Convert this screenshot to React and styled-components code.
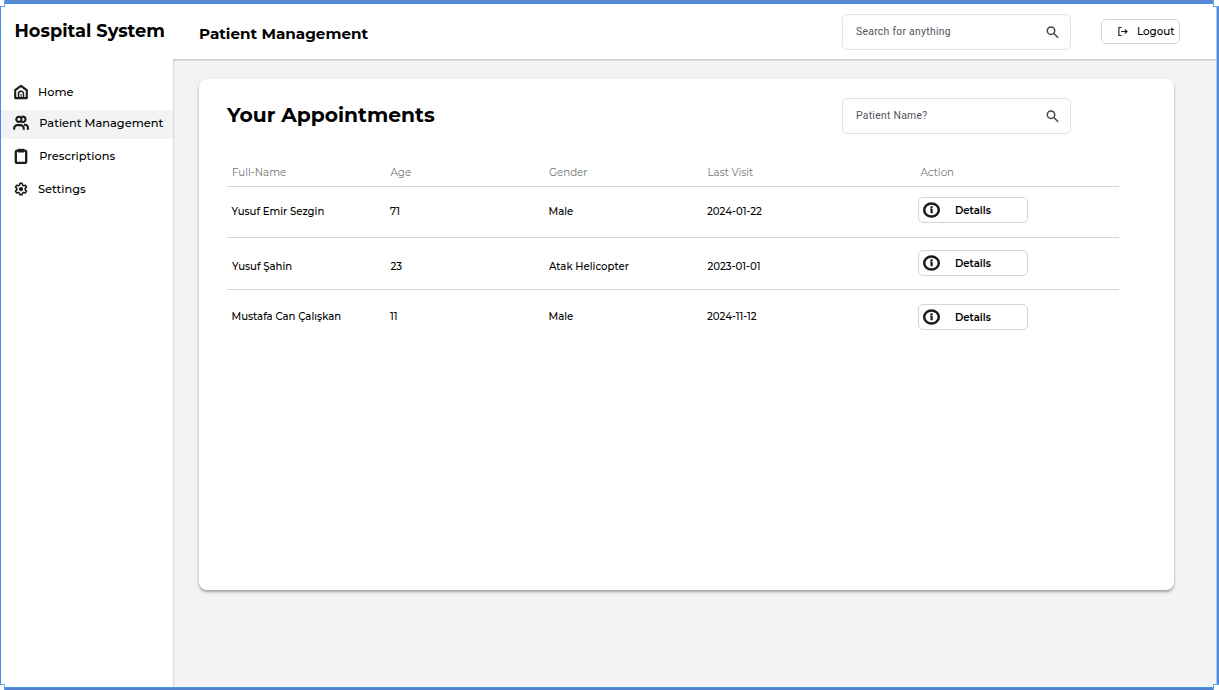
import React from "react";
import styled, { createGlobalStyle } from "styled-components";

const GlobalStyle = createGlobalStyle`
  * { box-sizing: border-box; }
  body { margin: 0; background: #fff; font-family: Montserrat, Inter, "Liberation Sans", sans-serif; color: #000; }
`;

const Window = styled.div`
  position: relative;
  display: flex;
  width: 1219px;
  height: 690px;
  overflow: hidden;
  background: #f2f3f5;
`;

const Frame = styled.div`
  position: absolute;
  inset: 0;
  z-index: 5;
  pointer-events: none;
  border-style: solid;
  border-width: 3px 2px 2px 1px;
  border-color: #5b88d0 #5585d3 #4f83d1 #448de3;
  box-shadow: inset 0 1px 0 #4290e8, inset 0 -1px 0 #4a97ea, inset -1px 0 0 #a9cdf5;
`;

const Handle = styled.i`
  position: absolute;
  z-index: 6;
  width: 8px;
  height: 8px;
  background: #fff;
  border: 1px solid #62a8f0;
  ${(p) => (p.$bottom ? "bottom: -2px;" : "top: -1px;")}
  ${(p) => (p.$right ? "right: -2px;" : "left: -3px;")}
`;

const Sidebar = styled.aside`
  flex: 0 0 173px;
  background: #fff;
  box-shadow: 0 0 2px rgba(0, 0, 0, 0.3);
  z-index: 1;
`;

const Text = styled.span`
  display: block;
  font-size: ${(p) => p.$size}px;
  font-weight: ${(p) => p.$weight || 500};
  letter-spacing: ${(p) => p.$track || 0}px;
  line-height: ${(p) => p.$line || 16}px;
  white-space: nowrap;
`;

const Brand = styled.div`
  height: 80px;
  padding: 18px 0 0 14.5px;
`;

const NavItem = styled.a`
  display: flex;
  align-items: center;
  height: ${(p) => p.$height}px;
  padding: 0 0 ${(p) => p.$lift}px 13px;
  gap: ${(p) => p.$gap}px;
  color: #000;
  background: ${(p) => (p.$active ? "#f2f3f5" : "transparent")};
`;

const Icon = styled.svg`
  flex: none;
  display: block;
  fill: none;
  stroke: ${(p) => p.$color || "#1b1b1d"};
  overflow: visible;
`;

const Main = styled.main`
  flex: 1;
  display: flex;
  flex-direction: column;
`;

const Header = styled.header`
  position: relative;
  z-index: 2;
  display: flex;
  height: 59px;
  padding: 14px 39px 0 26px;
  background: #fff;
  box-shadow: 0 1px 2px rgba(0, 0, 0, 0.25);
  clip-path: inset(0 0 -5px 0);
`;

const Title = styled.h1`
  flex: 1;
  margin: 0;
  padding-top: 10px;
`;

const SearchBox = styled.label`
  display: flex;
  align-items: center;
  justify-content: space-between;
  width: 229px;
  height: 36px;
  padding: 0 11px 0 13px;
  border: 1px solid #e2e2e4;
  border-radius: 5px;
  background: #fff;
  font-family: Roboto, sans-serif;
  color: #52525a;
`;

const LogoutButton = styled.div`
  display: flex;
  align-items: center;
  gap: 8px;
  width: 79px;
  height: 25px;
  margin: 5px 0 0 30px;
  padding: 1px 0 0 15px;
  border: 1px solid #d6d6d8;
  border-radius: 5px;
`;

const Card = styled.section`
  width: 975px;
  height: 511px;
  margin: 20px 0 0 26px;
  padding: 19px 55px 0 28px;
  border-radius: 8px;
  background: #fff;
  box-shadow: 0 2px 3px rgba(0, 0, 0, 0.34);
`;

const CardHead = styled.div`
  display: flex;
  justify-content: space-between;
  height: 62px;
  padding-right: 48px;
`;

const CardTitle = styled.h2`
  margin: 0;
  padding-top: 2px;
`;

const Row = styled.div`
  display: grid;
  grid-template-columns: 158.5px 158.5px 158.5px ${(p) => (p.$head ? 213 : 211)}px 1fr;
  align-items: start;
  height: ${(p) => p.$height}px;
  padding: ${(p) => p.$top}px 0 0 ${(p) => p.$left}px;
  border-bottom: ${(p) => (p.$last ? "0" : "1px solid #d8d6d8")};
  color: ${(p) => (p.$head ? "#757575" : "#000")};
`;

const DetailsButton = styled.div`
  display: flex;
  align-items: center;
  gap: 14px;
  width: 110px;
  height: 26px;
  margin: ${(p) => p.$offset}px 0 0 ${(p) => p.$shift}px;
  padding-left: 3px;
  border: 1px solid #d4d4d6;
  border-radius: 5px;
`;

const DetailsLabel = styled(Text)`
  padding-top: 1px;
`;

const HomeIcon = () => (
  <Icon width="16" height="16" viewBox="0 0 16 16" strokeWidth="2.1" strokeLinejoin="round">
    <path d="M2.2 6.2 8 1.8l5.8 4.4v7.9H2.2Z" />
    <path d="M5.5 14V9.8a2.5 2.5 0 0 1 5 0V14" strokeWidth="1.5" />
    <path d="M8 10v4" strokeWidth="1" />
  </Icon>
);

const UsersIcon = () => (
  <Icon width="16" height="16" viewBox="0 0 16 16" strokeWidth="2.1">
    <circle cx="5.9" cy="4.3" r="2.6" />
    <path d="M8.6 1.9a2.7 2.7 0 1 1 0 4.8" />
    <path d="M1.2 14.8v-1.5a3.2 3.2 0 0 1 3.2-3.2h3.1a3.2 3.2 0 0 1 3.2 3.2v1.5M11 9.7h1a2.9 2.9 0 0 1 2.9 2.9v2.2" />
  </Icon>
);

const ClipboardIcon = () => (
  <Icon width="16" height="16" viewBox="0 0 16 16" strokeWidth="2.3" strokeLinejoin="round">
    <rect x="2.8" y="2.6" width="10.4" height="12.2" rx="1.4" />
    <path d="M4.8 0.8h6.4v3.7H4.8Z" fill="#1b1b1d" stroke="none" />
  </Icon>
);

const SettingsIcon = () => (
  <Icon width="16" height="16" viewBox="0 0 16 16" strokeWidth="1.6" strokeLinejoin="round">
    <path d="m6.9 2.3-.4 1.8-1.2.7-1.7-.5-1.1 1.9 1.3 1.2v1.4L2.5 10l1.1 1.9 1.7-.5 1.2.7.4 1.7h2.2l.4-1.7 1.2-.7 1.7.5 1.1-1.9-1.3-1.2V7.4l1.3-1.2-1.1-1.9-1.7.5-1.2-.7-.4-1.8Z" />
    <circle cx="8" cy="8.1" r="1.3" fill="#1b1b1d" />
  </Icon>
);

const SearchIcon = () => (
  <Icon width="13" height="13" viewBox="0 0 13 13" strokeWidth="1.5" $color="#45454b">
    <circle cx="5" cy="4.7" r="3.7" />
    <path d="m7.8 7.5 4.3 4.3" />
  </Icon>
);

const LogoutIcon = () => (
  <Icon width="12" height="12" viewBox="0 0 12 12" strokeWidth="1.1">
    <path d="M4.5 1.5H1.9v8h2.6M4.2 5.5H10M7.9 3.4 10 5.5 7.9 7.6" />
  </Icon>
);

const InfoIcon = () => (
  <Icon width="19" height="17" viewBox="0 0 19 17" strokeWidth="2.5">
    <ellipse cx="9.5" cy="8" rx="7.3" ry="6.5" />
    <path d="M9.6 6.8v4.4M9.6 4.2v1.7M8.4 7.2h1" strokeWidth="2.2" />
  </Icon>
);

const NAV = [
  { label: "Home", icon: HomeIcon, height: 30, gap: 9, lift: 6 },
  { label: "Patient Management", icon: UsersIcon, height: 29, gap: 10.3, lift: 3 },
  { label: "Prescriptions", icon: ClipboardIcon, height: 35, gap: 10.3, lift: 1 },
  { label: "Settings", icon: SettingsIcon, height: 31, gap: 9, lift: 1 },
];

const ACTIVE = "Patient Management";

const PATIENTS = [
  { cells: ["Yusuf Emir Sezgin", "71", "Male", "2024-01-22"], height: 51, top: 17, left: 4.5, offset: -7 },
  { cells: ["Yusuf Şahin", "23", "Atak Helicopter", "2023-01-01"], height: 52, top: 21, left: 5, offset: -9 },
  { cells: ["Mustafa Can Çalışkan", "11", "Male", "2024-11-12"], height: 52, top: 19, left: 4.5, offset: -5, last: true },
];

const HEADINGS = ["Full-Name", "Age", "Gender", "Last Visit", "Action"];

function Search({ label }) {
  return (
    <SearchBox>
      <Text $size={10.4} $weight={400} $track={0.27}>{label}</Text>
      <SearchIcon />
    </SearchBox>
  );
}

export default function App() {
  return (
    <Window>
      <GlobalStyle />
      <Sidebar>
        <Brand>
          <Text $size={17.8} $weight={700} $line={25}>Hospital System</Text>
        </Brand>
        <nav>
          {NAV.map(({ label, icon: Glyph, height, gap, lift }) => (
            <NavItem key={label} $height={height} $gap={gap} $lift={lift} $active={label === ACTIVE}>
              <Glyph />
              <Text $size={11.4}>{label}</Text>
            </NavItem>
          ))}
        </nav>
      </Sidebar>
      <Main>
        <Header>
          <Title>
            <Text $size={15.2} $weight={700} $line={20}>Patient Management</Text>
          </Title>
          <Search label="Search for anything" />
          <LogoutButton>
            <LogoutIcon />
            <Text $size={10.3}>Logout</Text>
          </LogoutButton>
        </Header>
        <Card>
          <CardHead>
            <CardTitle>
              <Text $size={20.3} $weight={700} $line={30}>Your Appointments</Text>
            </CardTitle>
            <Search label="Patient Name?" />
          </CardHead>
          <Row $head $height={27} $top={5} $left={5}>
            {HEADINGS.map((h) => <Text key={h} $size={10.3} $weight={400}>{h}</Text>)}
          </Row>
          {PATIENTS.map((p) => (
            <Row key={p.cells[0]} $height={p.height} $top={p.top} $left={p.left} $last={p.last}>
              {p.cells.map((c) => <Text key={c} $size={10.15}>{c}</Text>)}
              <DetailsButton $offset={p.offset} $shift={-p.left + 4.5}>
                <InfoIcon />
                <DetailsLabel $size={10.1} $weight={600}>Details</DetailsLabel>
              </DetailsButton>
            </Row>
          ))}
        </Card>
      </Main>
      <Frame />
      <Handle />
      <Handle $right />
      <Handle $bottom />
      <Handle $bottom $right />
    </Window>
  );
}
